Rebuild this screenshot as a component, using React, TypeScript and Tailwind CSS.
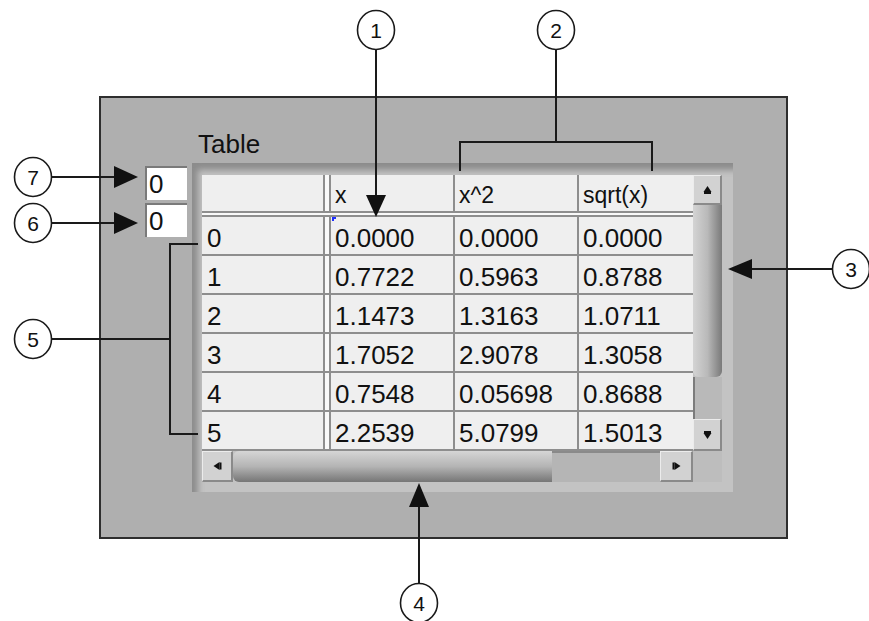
import React from "react";

const ROWS = [
  ["0.0000", "0.0000", "0.0000"],
  ["0.7722", "0.5963", "0.8788"],
  ["1.1473", "1.3163", "1.0711"],
  ["1.7052", "2.9078", "1.3058"],
  ["0.7548", "0.05698", "0.8688"],
  ["2.2539", "5.0799", "1.5013"],
];

const LINE = "border-[#8e8e8e]";
const cellText = "pl-[4px] pt-[5px] text-[26px] leading-[32px] text-[#111]";
const hdrText = "pl-[4px] pt-[2px] text-[23px] leading-[36px] text-[#111]";

function ArrowBtn({ dir, className }: { dir: "up" | "down" | "left" | "right"; className: string }) {
  const rot = { up: "", down: "rotate-180", left: "-rotate-90", right: "rotate-90" }[dir];
  return (
    <div
      className={`flex items-center justify-center border-t border-l border-t-[#ececec] border-l-[#ececec] border-b-2 border-r-2 border-b-[#8a8a8a] border-r-[#8a8a8a] bg-[#d2d2d2] ${className}`}
    >
      <svg width="11" height="10" viewBox="0 0 11 10" className={rot}>
        <path d="M5.5 1 L9.5 7 L1.5 7 Z" fill="#111" />
        <rect x="2" y="7" width="7" height="2" fill="#111" />
      </svg>
    </div>
  );
}

function Callout({ cx, cy, n }: { cx: number; cy: number; n: string }) {
  return (
    <g>
      <ellipse cx={cx} cy={cy} rx={18.5} ry={19.5} fill="white" stroke="#1a1a1a" strokeWidth={1.6} />
      <text x={cx} y={cy + 7.5} textAnchor="middle" fontSize={21} fontFamily="'Liberation Sans', Arial, sans-serif" fill="#111">
        {n}
      </text>
    </g>
  );
}

function Overlay() {
  const s = { stroke: "#1a1a1a", strokeWidth: 2, fill: "none" };
  return (
    <svg className="pointer-events-none absolute inset-0" width="869" height="621" viewBox="0 0 869 621">
      {/* 1 */}
      <line x1={376} y1={50} x2={376} y2={196} {...s} />
      <polygon points="366,195 386,195 376,217" fill="#111" />
      {/* 2 bracket */}
      <line x1={556} y1={50} x2={556} y2={142} {...s} />
      <polyline points="460,171 460,142 652,142 652,171" {...s} />
      {/* 3 */}
      <line x1={834} y1={269} x2={750} y2={269} {...s} />
      <polygon points="752,259 752,279 728,269" fill="#111" />
      {/* 4 */}
      <line x1={419} y1={584} x2={419} y2={506} {...s} />
      <polygon points="409,507 429,507 419,483" fill="#111" />
      {/* 5 bracket */}
      <line x1={52} y1={339} x2={170} y2={339} {...s} />
      <polyline points="198,244 170,244 170,434 198,434" {...s} />
      {/* 6, 7 */}
      <line x1={52} y1={223} x2={116} y2={223} {...s} />
      <polygon points="114,212 114,234 138,223" fill="#111" />
      <line x1={52} y1={177} x2={116} y2={177} {...s} />
      <polygon points="114,166 114,188 138,177" fill="#111" />

      <Callout cx={376} cy={30} n="1" />
      <Callout cx={556} cy={30} n="2" />
      <Callout cx={851} cy={269} n="3" />
      <Callout cx={419} cy={603} n="4" />
      <Callout cx={33} cy={339} n="5" />
      <Callout cx={33} cy={223} n="6" />
      <Callout cx={33} cy={177} n="7" />
    </svg>
  );
}

export default function App() {
  return (
    <div className="relative h-[621px] w-[869px] overflow-hidden bg-white pl-[99px] pt-[96px] font-['Liberation_Sans',Arial,sans-serif]">
      <div className="h-[443px] w-[689px] border-2 border-[#2e2e2e] bg-[#afafaf] pl-[44px]">
        <div className="ml-[53px] mt-[33px] text-[26px] leading-[26px] text-[#111]">Table</div>

        <div className="mt-[6px] flex gap-[5px]">
          {/* index displays */}
          <div className="mt-[3px] flex flex-col gap-[3px]">
            {["0", "0"].map((v, i) => (
              <div key={i} className="h-[34px] w-[42px] border-l-2 border-t-2 border-[#7a7a7a] bg-white pl-[2px] text-[26px] leading-[32px] text-[#111]">
                {v}
              </div>
            ))}
          </div>

          {/* table frame */}
          <div className="h-[329px] w-[541px] bg-[#c3c3c3] pb-[10px] pl-[10px] pr-[11px] pt-[12px] shadow-[inset_9px_10px_6px_-3px_#8c8c8c]">
            <div className="flex">
              <div className="w-[491px]">
                {/* column headers */}
                <div className="flex h-[38px] bg-[#efefef]">
                  <div className={`w-[123px] border-b-2 border-r-2 ${LINE}`} />
                  <div className={`w-[4px] border-b-2 bg-[#f9f9f9] ${LINE}`} />
                  <div className={`w-[126px] border-x-2 border-b-2 ${LINE} ${hdrText}`}>x</div>
                  <div className={`w-[124px] border-b-2 border-r-2 ${LINE} ${hdrText}`}>x^2</div>
                  <div className={`w-[114px] border-b-2 ${LINE} ${hdrText}`}>sqrt(x)</div>
                </div>
                <div className="h-[2px] bg-[#f9f9f9]" />
                <div className="h-[2px] bg-[#8e8e8e]" />

                {ROWS.map((r, i) => (
                  <div key={i} className="flex h-[39px] bg-[#efefef]">
                    <div className={`w-[123px] border-b-2 border-r-2 ${LINE} ${cellText} pl-[5px]`}>{i}</div>
                    <div className={`w-[4px] border-b-2 bg-[#f9f9f9] ${LINE}`} />
                    <div className={`relative w-[126px] border-x-2 border-b-2 ${LINE} ${cellText}`}>
                      {i === 0 && <span className="absolute left-[1px] top-0 h-[4px] w-[4px] border-l-2 border-t-2 border-[#1f2fff]" />}
                      {r[0]}
                    </div>
                    <div className={`w-[124px] border-b-2 border-r-2 ${LINE} ${cellText}`}>{r[1]}</div>
                    <div className={`w-[114px] border-b-2 ${LINE} ${cellText}`}>{r[2]}</div>
                  </div>
                ))}
              </div>

              {/* vertical scrollbar */}
              <div className="flex h-[276px] w-[29px] flex-col">
                <ArrowBtn dir="up" className="h-[30px]" />
                <div className="h-[172px] rounded-b-[6px] bg-gradient-to-r from-[#d4d4d4] via-[#b9b9b9] to-[#7a7a7a]" />
                <div className="flex-1 border-l-2 border-[#7c7c7c] bg-[#b9b9b9]" />
                <ArrowBtn dir="down" className="h-[32px]" />
              </div>
            </div>

            {/* horizontal scrollbar */}
            <div className="flex h-[31px]">
              <ArrowBtn dir="left" className="w-[31px]" />
              <div className="w-[319px] rounded-l-[6px] bg-gradient-to-b from-[#d6d6d6] via-[#b4b4b4] to-[#767676]" />
              <div className="w-[108px] border-t-2 border-[#8a8a8a] bg-[#b5b5b5]" />
              <ArrowBtn dir="right" className="w-[33px]" />
              <div className="w-[29px] bg-[#bdbdbd]" />
            </div>
          </div>
        </div>
      </div>

      <Overlay />
    </div>
  );
}
